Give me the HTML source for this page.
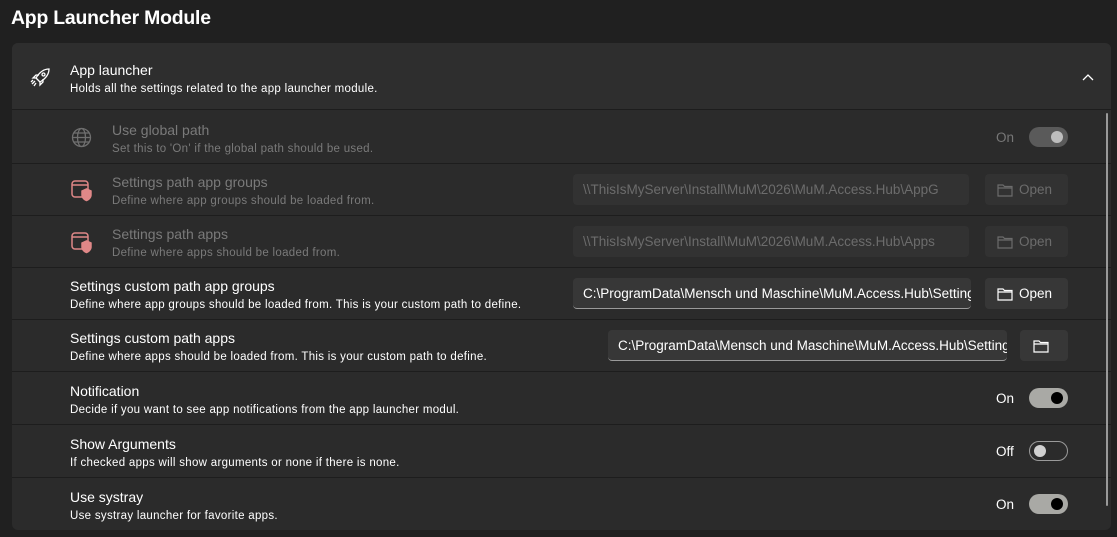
<!DOCTYPE html>
<html><head><meta charset="utf-8"><style>
*{box-sizing:border-box;margin:0;padding:0}
body{width:1117px;height:537px;background:#202020;font-family:"Liberation Sans",sans-serif;color:#fff;position:relative;overflow:hidden}
.title{position:absolute;left:11px;top:7px;font-size:19.4px;font-weight:bold;letter-spacing:-0.2px}
.card{position:absolute;left:12px;top:43px;width:1099px;height:487px;background:#2b2b2b;border-radius:6px;overflow:hidden}
.hdr{position:absolute;left:0;top:0;width:100%;height:67px;background:#2e2e2e;border-bottom:1px solid #1d1d1d}
.row{position:absolute;left:0;width:100%;border-bottom:1px solid #1d1d1d}
.t{position:absolute;font-size:14px}
.s{position:absolute;font-size:11.5px;letter-spacing:0.3px;margin-top:2px}
.dis .t,.dis .s{color:#7a7a7a}
.sw{position:absolute;left:1017px;width:39px;height:20px;border-radius:10px;background:#a9a9a5}
.sw::after{content:"";position:absolute;right:5px;top:4px;width:12px;height:12px;border-radius:6px;background:#000}
.sw.off{background:transparent;border:1px solid #9a9a9a}
.sw.off::after{left:4px;right:auto;top:3px;background:#d0d0d0}
.sw.d{background:#5a5a5a}
.sw.d::after{background:#bdbdbd}
.lbl{position:absolute;left:984px;font-size:13.5px}
.tb{position:absolute;height:31px;border-radius:4px;background:#373737;font-size:13.5px;padding:8px 10px;white-space:nowrap;overflow:hidden;border-bottom:1px solid #9a9a9a}
.tb.d{background:#323232;color:#6c6c6c;border-bottom:none}
.btn{position:absolute;height:31px;border-radius:4px;background:#373737;font-size:13.5px;padding:8px 0 0 12px}
.btn.d{background:#323232;color:#6c6c6c}
.btn svg{vertical-align:-3px;margin-right:6px}
</style></head><body>
<div class="title">App Launcher Module</div>
<div class="card">
 <div class="hdr">
  <svg style="position:absolute;left:18px;top:25px" width="22" height="20" viewBox="0 0 22 20" fill="none" stroke="#fff" stroke-width="1.3"><path d="M19 1 C13 1 9 5 6 10 L10 14 C15 11 19 7 19 1Z"/><circle cx="13.5" cy="6.5" r="1.5"/><path d="M6 10 L3 10 L6 7 L9 7 M10 14 L10 17 L13 14 L13 11 M5 13 L2 16 M6 15 L4 18 M3 12 L1 14"/></svg>
  <div class="t" style="left:58px;top:19px">App launcher</div>
  <div class="s" style="left:58px;top:38px">Holds all the settings related to the app launcher module.</div>
  <svg style="position:absolute;left:1070px;top:30px" width="12" height="8" viewBox="0 0 12 8" fill="none" stroke="#fff" stroke-width="1.3"><path d="M1 7 L6 2 L11 7"/></svg>
 </div>
 <div class="row dis" style="top:68px;height:53px">
  <svg style="position:absolute;left:59px;top:16px" width="21" height="21" viewBox="0 0 21 21" fill="none" stroke="#6f6f6f" stroke-width="1.3"><circle cx="10.5" cy="10.5" r="9"/><ellipse cx="10.5" cy="10.5" rx="4" ry="9"/><path d="M1.5 10.5h18M3 6h15M3 15h15"/></svg>
  <div class="t" style="left:100px;top:11px">Use global path</div>
  <div class="s" style="left:100px;top:30px">Set this to 'On' if the global path should be used.</div>
  <div class="lbl" style="color:#777;top:19px">On</div>
  <div class="sw d" style="top:16px"></div>
 </div>
 <div class="row dis" style="top:121px;height:52px">
  <svg style="position:absolute;left:59px;top:16px" width="22" height="22" viewBox="0 0 22 22" fill="none" stroke="#e08888" stroke-width="1.5"><rect x="1" y="1" width="16" height="16" rx="3"/><path d="M1 5h16"/><path d="M11 11 L15.5 9 L20 11 L20 15 C20 18 17 20 15.5 20.5 C14 20 11 18 11 15Z" fill="#e08888"/></svg>
  <div class="t" style="left:100px;top:10px">Settings path app groups</div>
  <div class="s" style="left:100px;top:29px">Define where app groups should be loaded from.</div>
  <div class="tb d" style="left:561px;top:10px;width:396px">\\ThisIsMyServer\Install\MuM\2026\MuM.Access.Hub\AppG</div>
  <div class="btn d" style="left:973px;top:10px;width:83px"><svg width="16" height="14" viewBox="0 0 16 14" fill="none" stroke="#6c6c6c" stroke-width="1.2"><path d="M1 2h5l1.5 1.5H15V13H1Z M1 5h14"/></svg>Open</div>
 </div>
 <div class="row dis" style="top:173px;height:52px">
  <svg style="position:absolute;left:59px;top:16px" width="22" height="22" viewBox="0 0 22 22" fill="none" stroke="#e08888" stroke-width="1.5"><rect x="1" y="1" width="16" height="16" rx="3"/><path d="M1 5h16"/><path d="M11 11 L15.5 9 L20 11 L20 15 C20 18 17 20 15.5 20.5 C14 20 11 18 11 15Z" fill="#e08888"/></svg>
  <div class="t" style="left:100px;top:10px">Settings path apps</div>
  <div class="s" style="left:100px;top:29px">Define where apps should be loaded from.</div>
  <div class="tb d" style="left:561px;top:10px;width:396px">\\ThisIsMyServer\Install\MuM\2026\MuM.Access.Hub\Apps</div>
  <div class="btn d" style="left:973px;top:10px;width:83px"><svg width="16" height="14" viewBox="0 0 16 14" fill="none" stroke="#6c6c6c" stroke-width="1.2"><path d="M1 2h5l1.5 1.5H15V13H1Z M1 5h14"/></svg>Open</div>
 </div>
 <div class="row" style="top:225px;height:52px">
  <div class="t" style="left:58px;top:10px">Settings custom path app groups</div>
  <div class="s" style="left:58px;top:29px">Define where app groups should be loaded from. This is your custom path to define.</div>
  <div class="tb" style="left:561px;top:10px;width:398px">C:\ProgramData\Mensch und Maschine\MuM.Access.Hub\Settings</div>
  <div class="btn" style="left:973px;top:10px;width:83px"><svg width="16" height="14" viewBox="0 0 16 14" fill="none" stroke="#fff" stroke-width="1.2"><path d="M1 2h5l1.5 1.5H15V13H1Z M1 5h14"/></svg>Open</div>
 </div>
 <div class="row" style="top:277px;height:52px">
  <div class="t" style="left:58px;top:10px">Settings custom path apps</div>
  <div class="s" style="left:58px;top:29px">Define where apps should be loaded from. This is your custom path to define.</div>
  <div class="tb" style="left:596px;top:10px;width:399px">C:\ProgramData\Mensch und Maschine\MuM.Access.Hub\Settings</div>
  <div class="btn" style="left:1008px;top:10px;width:48px;padding-left:13px"><svg width="16" height="14" viewBox="0 0 16 14" fill="none" stroke="#fff" stroke-width="1.2"><path d="M1 2h5l1.5 1.5H15V13H1Z M1 5h14"/></svg></div>
 </div>
 <div class="row" style="top:329px;height:53px">
  <div class="t" style="left:58px;top:11px">Notification</div>
  <div class="s" style="left:58px;top:30px">Decide if you want to see app notifications from the app launcher modul.</div>
  <div class="lbl" style="top:19px">On</div><div class="sw" style="top:16px"></div>
 </div>
 <div class="row" style="top:382px;height:53px">
  <div class="t" style="left:58px;top:11px">Show Arguments</div>
  <div class="s" style="left:58px;top:30px">If checked apps will show arguments or none if there is none.</div>
  <div class="lbl" style="top:19px">Off</div><div class="sw off" style="top:16px"></div>
 </div>
 <div class="row" style="top:435px;height:53px;border:none">
  <div class="t" style="left:58px;top:11px">Use systray</div>
  <div class="s" style="left:58px;top:30px">Use systray launcher for favorite apps.</div>
  <div class="lbl" style="top:19px">On</div><div class="sw" style="top:16px"></div>
 </div>
 <div style="position:absolute;left:1094px;top:70px;width:2px;height:393px;background:#9a9a9a;border-radius:1px"></div>
</div>
</body></html>
